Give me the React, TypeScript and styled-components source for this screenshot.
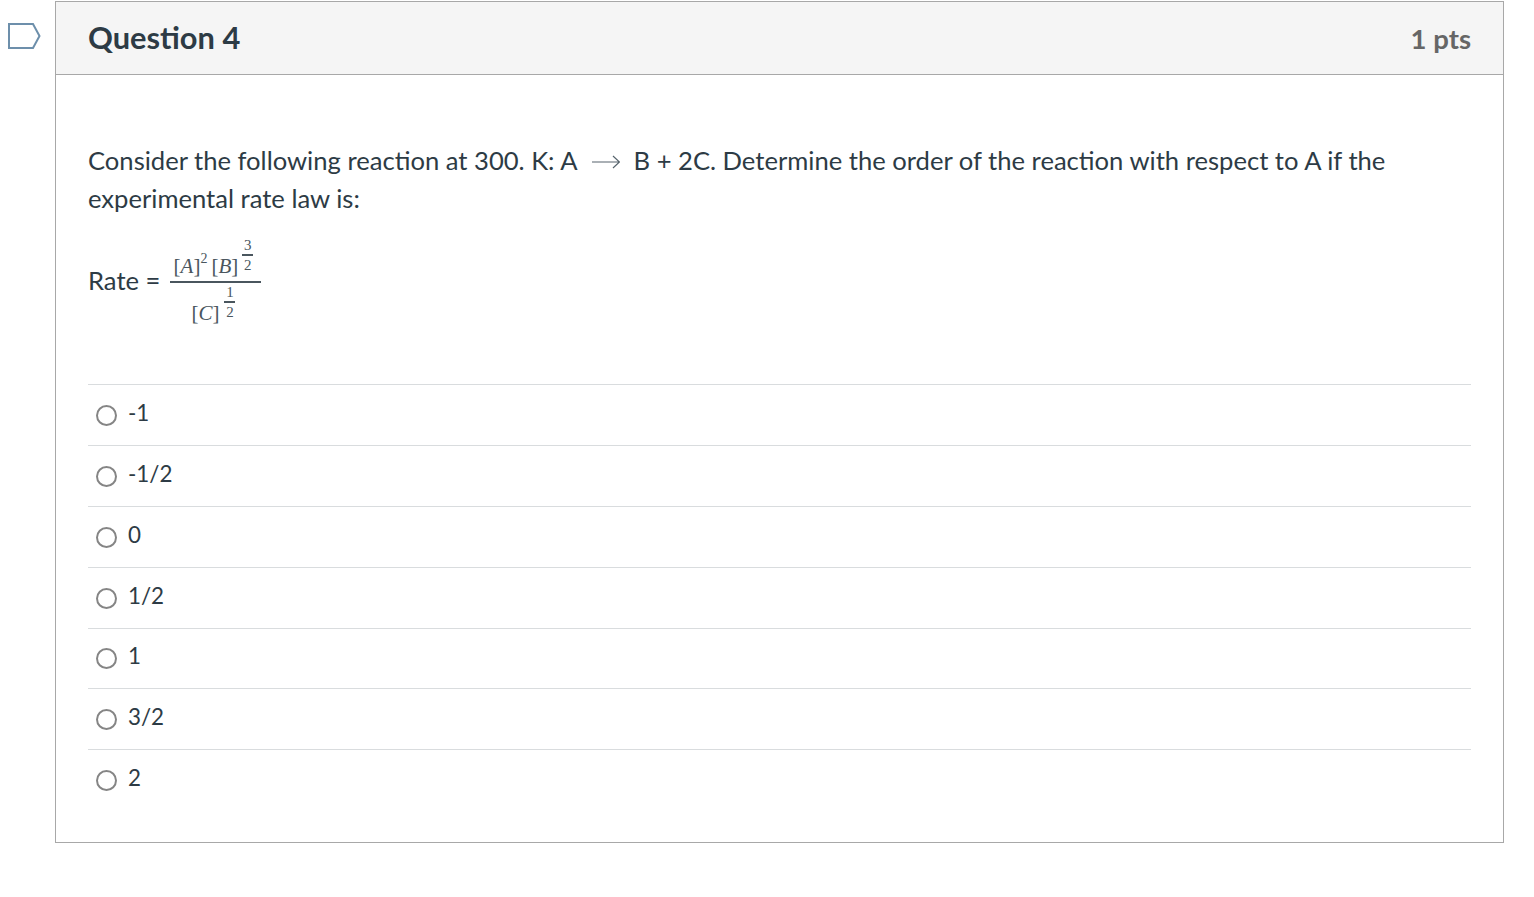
import React from 'react'
import styled, { createGlobalStyle } from 'styled-components'

const Global = createGlobalStyle`
    html, body {
        margin: 0;
        padding: 0;
        background: #fff;
    }
    body {
        font-family: Lato, "Noto Sans", sans-serif;
        color: #2d3b45;
    }
`
const Page = styled.div`
    display: flex;
    align-items: flex-start;
    padding-top: 1px;
    padding-right: 30px;
    height: 896px;
    box-sizing: border-box;
`
const Marker = styled.div`
    width: 55px;
    flex: none;
    padding: 21px 0 0 8px;
    box-sizing: border-box;
    line-height: 0;
`
const Card = styled.div`
    flex: 1;
    height: 842px;
    box-sizing: border-box;
    border: 1px solid #a8a8a8;
`
const Header = styled.div`
    height: 73px;
    box-sizing: border-box;
    border-bottom: 1px solid #a8a8a8;
    background: #f5f5f5;
    display: flex;
    justify-content: space-between;
    align-items: center;
    padding: 0 32px;
`
const Title = styled.h2`
    margin: -2px 0 0;
    font-size: 30.8px;
    font-weight: 700;
`
const Points = styled.div`
    font-size: 27.5px;
    font-weight: 700;
    color: #666;
`
const Body = styled.div`
    padding: 66px 32px 0;
`
const Paragraph = styled.p`
    margin: 0;
    font-size: 25.6px;
    line-height: 38px;
`
const Arrow = styled.svg`
    width: 28px;
    height: 14px;
    margin: 0 14px;
    vertical-align: 1px;
`
const RateLine = styled.div`
    display: flex;
    align-items: center;
    height: 92px;
    margin-top: 17px;
    font-size: 25.6px;
    gap: 10px;
`
const Fraction = styled.div`
    display: flex;
    flex-direction: column;
    align-items: center;
    width: 91px;
    margin-top: 2px;
    font-family: "Liberation Serif", serif;
    color: #4a565e;
`
const Numerator = styled.div`
    display: flex;
    align-items: flex-end;
    height: 44px;
    font-size: 21px;
    line-height: 26px;
    padding: 0 5px 2px 0;
    box-sizing: border-box;
`
const Denominator = styled.div`
    display: flex;
    align-items: flex-end;
    height: 43px;
    font-size: 21px;
    line-height: 26px;
    padding-right: 5px;
    box-sizing: border-box;
`
const Bar = styled.div`
    width: 100%;
    height: 2px;
    background: #4a565e;
`
const Italic = styled.span`
    font-style: italic;
`
const Sup = styled.span`
    align-self: flex-start;
    font-size: 14px;
    line-height: 15px;
    margin-top: 14px;
    margin-right: 4px;
`
const SmallFrac = styled.span`
    display: inline-flex;
    flex-direction: column;
    align-items: center;
    font-size: 15px;
    line-height: 18px;
    margin-left: ${(p: { $left: number }) => p.$left}px;
    margin-bottom: 5px;
    & > i {
        display: block;
        width: 11px;
        height: 1.5px;
        background: #4a565e;
    }
`
const Answers = styled.div`
    margin-top: 58.4px;
`
const Answer = styled.label`
    display: flex;
    align-items: center;
    height: 60.8px;
    box-sizing: border-box;
    border-top: 1px solid #d9dcde;
    padding-left: 8px;
    font-size: 22.4px;
    gap: 11px;
`
const Radio = styled.span`
    width: 21px;
    height: 21px;
    box-sizing: border-box;
    border: 2px solid #858585;
    border-radius: 50%;
    margin-top: 1px;
    flex: none;
`
const AnswerText = styled.span`
    margin-top: -5px;
`

const answers = ['-1', '-1/2', '0', '1/2', '1', '3/2', '2']

export default function App() {
    return (
        <Page>
            <Global />
            <Marker>
                <svg width="33" height="28" viewBox="0 0 33 28">
                    <path d="M1 2 H25 L31.5 14 L25 26 H1 Z" fill="#fff" stroke="#6d8fab" strokeWidth="2" />
                </svg>
            </Marker>
            <Card>
                <Header>
                    <Title>Question 4</Title>
                    <Points>1 pts</Points>
                </Header>
                <Body>
                    <Paragraph>
                        Consider the following reaction at 300. K: A
                        <Arrow viewBox="0 0 28 14">
                            <path d="M0 7 H27 M21 1 L27.5 7 L21 13" fill="none" stroke="#56636c" strokeWidth="1.2" />
                        </Arrow>
                        B + 2C. Determine the order of the reaction with respect to A if the
                        <br />
                        experimental rate law is:
                    </Paragraph>
                    <RateLine>
                        Rate =
                        <Fraction>
                            <Numerator>
                                [<Italic>A</Italic>]
                                <Sup>2</Sup>
                                [<Italic>B</Italic>]
                                <SmallFrac $left={4}>3<i />2</SmallFrac>
                            </Numerator>
                            <Bar />
                            <Denominator>
                                [<Italic>C</Italic>]
                                <SmallFrac $left={5}>1<i />2</SmallFrac>
                            </Denominator>
                        </Fraction>
                    </RateLine>
                    <Answers>
                        {answers.map(a => (
                            <Answer key={a}>
                                <Radio />
                                <AnswerText>{a}</AnswerText>
                            </Answer>
                        ))}
                    </Answers>
                </Body>
            </Card>
        </Page>
    )
}
